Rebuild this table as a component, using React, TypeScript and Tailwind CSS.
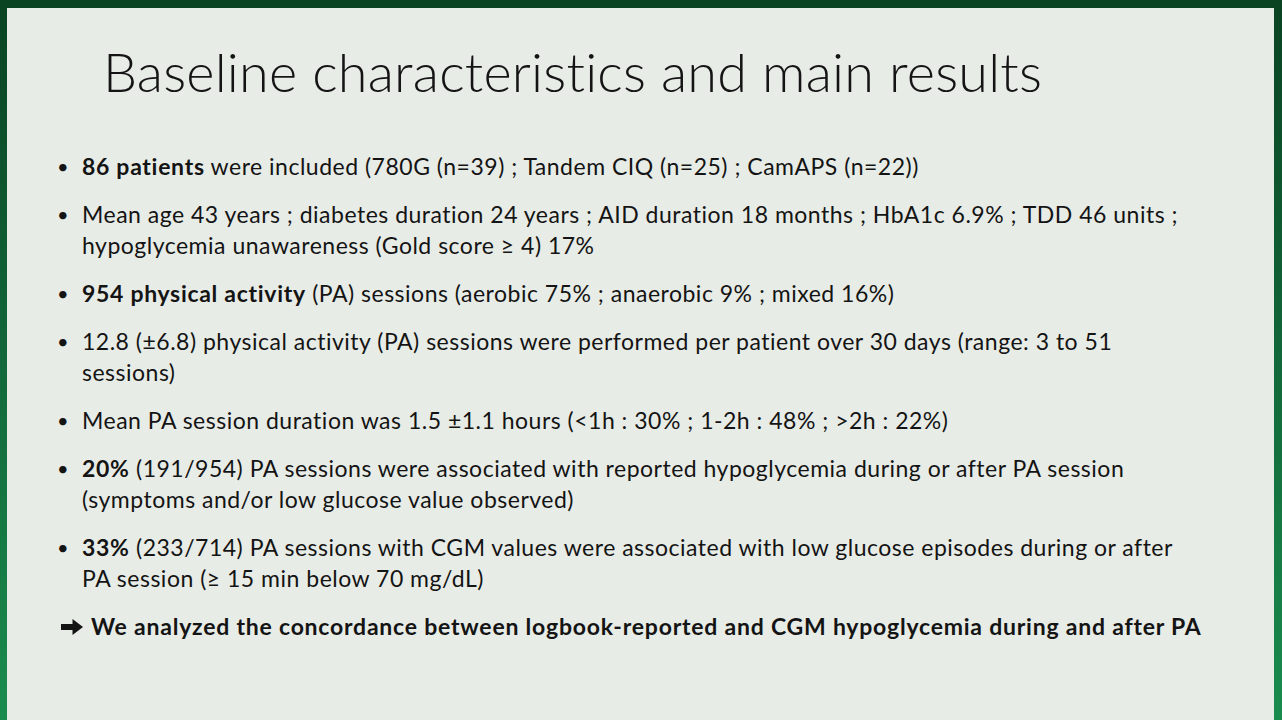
const bullets: { bold?: string; lines: string[] }[] = [
  { bold: "86 patients", lines: [" were included (780G (n=39) ; Tandem CIQ (n=25) ; CamAPS (n=22))"] },
  {
    lines: [
      "Mean age 43 years ; diabetes duration 24 years ; AID duration 18 months ; HbA1c 6.9% ; TDD 46 units ;",
      "hypoglycemia unawareness (Gold score \u2265 4) 17%",
    ],
  },
  { bold: "954 physical activity", lines: [" (PA) sessions (aerobic 75% ; anaerobic 9% ; mixed 16%)"] },
  {
    lines: [
      "12.8 (\u00b16.8) physical activity (PA) sessions were performed per patient over 30 days (range: 3 to 51",
      "sessions)",
    ],
  },
  { lines: ["Mean PA session duration was 1.5 \u00b11.1 hours (<1h : 30% ; 1-2h : 48% ; >2h : 22%)"] },
  {
    bold: "20%",
    lines: [
      " (191/954) PA sessions were associated with reported hypoglycemia during or after PA session",
      "(symptoms and/or low glucose value observed)",
    ],
  },
  {
    bold: "33%",
    lines: [
      " (233/714) PA sessions with CGM values were associated with low glucose episodes during or after",
      "PA session (\u2265 15 min below 70 mg/dL)",
    ],
  },
];

export default function App() {
  return (
    <div className="h-[720px] w-[1282px] overflow-hidden bg-gradient-to-b from-[#0a4322] via-[#12683a] to-[#1a8c4e] pt-[8px] pl-[7px] pr-[8px]">
      <div className="h-full bg-[#e8ece7] text-[#141414] font-['Lato',sans-serif]">
        <h1 className="pl-[96px] pt-[31px] text-[54px] leading-[65px] font-light tracking-[0.2px]">
          Baseline characteristics and main results
        </h1>

        <ul className="mt-[47px] flex flex-col gap-[17px] pl-[50px] text-[23px] leading-[31px] tracking-[0.5px]">
          {bullets.map((b, i) => (
            <li key={i} className="flex">
              <span className="w-[25px] shrink-0 text-[20px]">{"\u2022"}</span>
              <div className="whitespace-pre">
                {b.lines.map((line, j) => (
                  <div key={j}>
                    {j === 0 && b.bold && <span className="font-bold tracking-[0.7px]">{b.bold}</span>}
                    {line}
                  </div>
                ))}
              </div>
            </li>
          ))}
          <li className="flex items-center font-bold tracking-[0.78px] whitespace-nowrap">
            <svg width="24" height="18" viewBox="0 0 24 18" className="mr-[7px] ml-[3px] shrink-0">
              <path d="M1 6h11.5V1L23 9l-10.5 8v-5H1z" fill="#141414" />
            </svg>
            We analyzed the concordance between logbook-reported and CGM hypoglycemia during and after PA
          </li>
        </ul>
      </div>
    </div>
  );
}
